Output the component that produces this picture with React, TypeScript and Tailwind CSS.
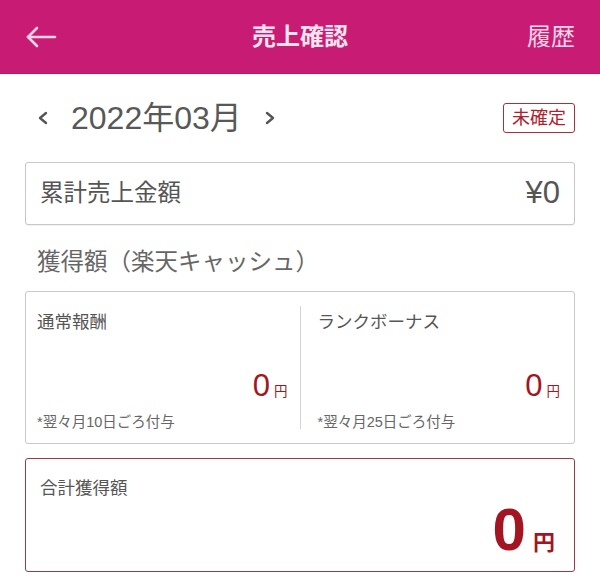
import React from "react";

const font = { fontFamily: '"Liberation Sans", "Noto Sans CJK JP", sans-serif' };

function Sub({ label, note, left }: { label: string; note: string; left: boolean }) {
  return (
    <div className={`flex flex-col pt-[19px] pb-[12px] ${left ? "pl-[11px] pr-[12px]" : "pl-[17px] pr-[14px]"}`}>
      <div className="text-[17.5px] leading-[22px] text-[#555]">{label}</div>
      <div className="mt-auto flex items-baseline justify-end text-[#a31621]">
        <span className="text-[31px] leading-[31px] font-light">0</span>
        <span className="ml-[4px] text-[13.5px]">円</span>
      </div>
      <div className="mt-[11px] text-[14.5px] leading-[18px] text-[#666]">{note}</div>
    </div>
  );
}

export default function App() {
  return (
    <div className="w-[600px] h-[586px] bg-white overflow-hidden" style={font}>
      <header className="grid h-[74px] grid-cols-[1fr_auto_1fr] items-center bg-[#c81c74] px-[25px] border-b border-[#b8166a]">
        <div className="flex items-center">
          <svg width="32" height="24" viewBox="0 0 32 24" fill="none" stroke="#f9d3e6" strokeWidth="2.6" strokeLinecap="round" strokeLinejoin="round">
            <path d="M30 12H3" />
            <path d="M12 3L3 12l9 9" />
          </svg>
        </div>
        <div className="text-[24px] font-bold text-[#fbe4ef]">売上確認</div>
        <div className="text-right text-[24px] text-[#f7d6e7]">履歴</div>
      </header>

      <div className="flex h-[88px] items-center px-[25px]">
        <div className="flex items-center text-[#555]">
          <svg width="14" height="16" viewBox="0 0 14 16" className="ml-[11px]" fill="none" stroke="#555" strokeWidth="2.4" strokeLinecap="round" strokeLinejoin="round">
            <path d="M10 3L4 8l6 5" />
          </svg>
          <span className="ml-[21px] text-[32px] leading-[36px] text-[#585858]">2022年03月</span>
          <svg width="14" height="16" viewBox="0 0 14 16" className="ml-[21px]" fill="none" stroke="#555" strokeWidth="2.4" strokeLinecap="round" strokeLinejoin="round">
            <path d="M4 3l6 5-6 5" />
          </svg>
        </div>
        <div className="ml-auto rounded-[3px] border-[1.5px] border-[#a6313b] px-[8px] py-[2px] text-[18px] leading-[24px] text-[#b0202c]">未確定</div>
      </div>

      <div className="mx-[25px] flex h-[63px] items-center justify-between rounded-[3px] border-[1.5px] border-[#c8c8c8] px-[14px] shadow-[0_1px_1px_rgba(0,0,0,0.06)]">
        <span className="text-[23.5px] text-[#555]">累計売上金額</span>
        <span className="text-[31px] text-[#555]">¥0</span>
      </div>

      <div className="mt-[22px] px-[37px] text-[23.5px] leading-[30px] text-[#666]">獲得額（楽天キャッシュ）</div>

      <div className="mx-[25px] mt-[14px] grid h-[153px] grid-cols-[1fr_1px_1fr] rounded-[3px] border-[1.5px] border-[#c8c8c8]">
        <Sub left label="通常報酬" note="*翌々月10日ごろ付与" />
        <div className="my-[14px] bg-[#d4d4d4]" />
        <Sub left={false} label="ランクボーナス" note="*翌々月25日ごろ付与" />
      </div>

      <div className="mx-[25px] mt-[14px] flex h-[114px] flex-col rounded-[3px] border-[1.5px] border-[#9c3a44] px-[14px] pt-[18px] pb-[11px]">
        <div className="text-[17.5px] leading-[22px] text-[#555]">合計獲得額</div>
        <div className="mt-auto flex items-baseline justify-end pr-[5px] text-[#a31621]">
          <span className="text-[60px] leading-[60px] font-bold">0</span>
          <span className="ml-[7px] text-[22px] font-bold">円</span>
        </div>
      </div>
    </div>
  );
}
